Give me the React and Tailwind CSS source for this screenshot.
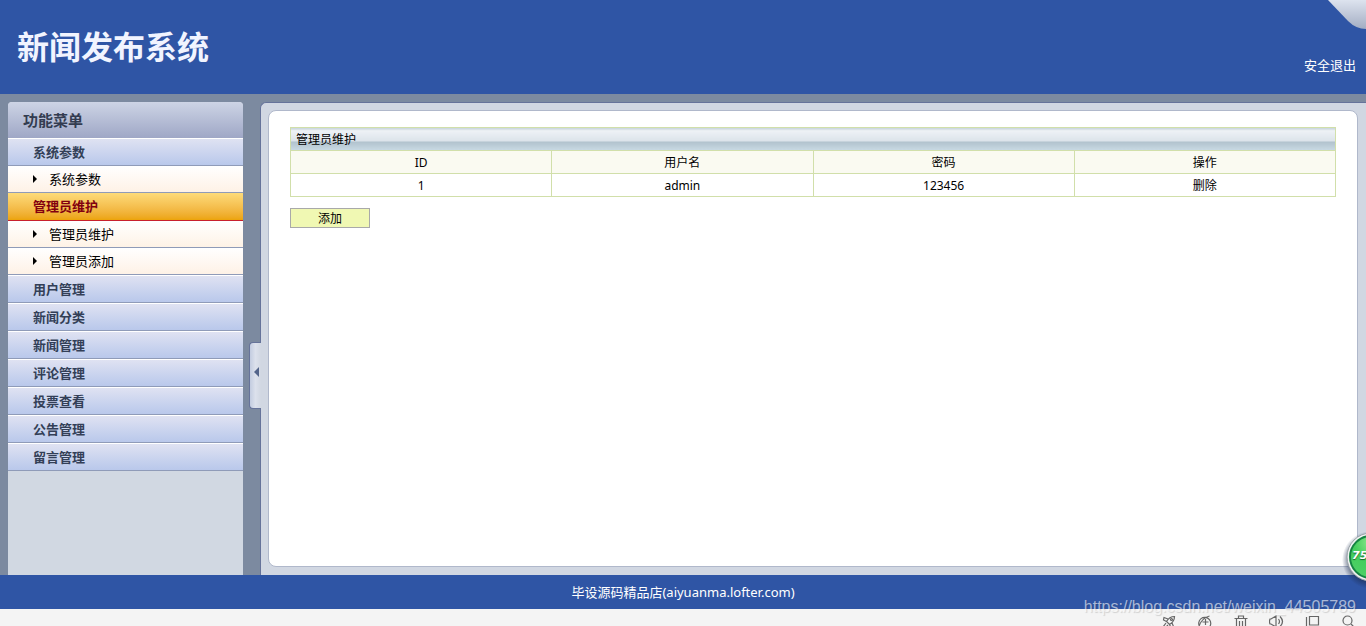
import React, { useState } from 'react';

const menus = [
	{ title: '系统参数', items: ['系统参数'] },
	{ title: '管理员维护', items: ['管理员维护', '管理员添加'] },
	{ title: '用户管理' },
	{ title: '新闻分类' },
	{ title: '新闻管理' },
	{ title: '评论管理' },
	{ title: '投票查看' },
	{ title: '公告管理' },
	{ title: '留言管理' },
];

const admins = [{ id: 1, nome: 'admin', senha: '123456' }];

function Header() {
	return (
		<header className="relative flex h-[94px] shrink-0 items-center justify-between bg-[#2f55a5] pr-[10px] pl-[17px]">
			<h1 className="text-[32px] leading-[36px] font-bold text-[#f1f4ff]">新闻发布系统</h1>
			<a href="#sair" className="mt-[35px] text-[13px] leading-[18px] text-white">
				安全退出
			</a>
			<svg className="absolute top-0 right-0" width="38" height="30" viewBox="0 0 38 30">
				<defs>
					<linearGradient id="canto" x1="0" y1="0" x2="0" y2="1">
						<stop offset="0" stopColor="#dde3ee" />
						<stop offset="1" stopColor="#a3adc3" />
					</linearGradient>
				</defs>
				<path d="M0 0 L20 21 Q28 29 38 29 V0 Z" fill="url(#canto)" />
			</svg>
		</header>
	);
}

function Sidebar({ ativo, setAtivo }) {
	return (
		<nav className="mt-2 w-[235px] shrink-0 overflow-hidden rounded-t-[4px] bg-[#d1d8e2]">
			<h2 className="h-9 bg-linear-to-b from-[#cdd4e5] to-[#9fa7c6] pl-[15px] text-[15px] leading-[36px] font-bold text-[#333c50]">
				功能菜单
			</h2>
			{menus.map((menu) => (
				<div key={menu.title}>
					<button
						type="button"
						onClick={() => setAtivo(menu.title)}
						className={
							menu.title === ativo
								? 'block h-7 w-full border-b border-[#c8202c] bg-linear-to-b from-[#fddb79] to-[#eca406] pl-[25px] text-left text-[13px] leading-[27px] font-bold text-[#82000f]'
								: 'block h-7 w-full border-t border-b border-t-white border-b-[#8f9bb8] bg-linear-to-b from-[#dfe2f2] to-[#b9c8eb] pl-[25px] text-left text-[13px] leading-[25px] font-bold text-[#333f57]'
						}
					>
						{menu.title}
					</button>
					{menu.items?.map((item) => (
						<a
							key={item}
							href="#item"
							className="flex h-[27px] items-center border-b border-[#8f9bb8] bg-linear-to-b from-white to-[#fef2e6] pl-[25px] text-[13px] leading-[18px] text-black"
						>
							<svg className="mr-3 shrink-0" width="4" height="8" viewBox="0 0 4 8">
								<path d="M0 0 L4 4 L0 8 Z" />
							</svg>
							{item}
						</a>
					))}
				</div>
			))}
		</nav>
	);
}

function AdminTable() {
	const celula = 'h-[23px] border border-[#d1dfaa] p-0 pt-[2px] text-center font-normal';

	return (
		<table className="w-full table-fixed border-collapse text-[12px] leading-[18px] text-black">
			<thead>
				<tr>
					<th
						colSpan={4}
						className="h-[23px] border border-[#d1dfaa] bg-[linear-gradient(#c6d0d8_0,#eef2f6_2px,#dbe3ea_13px,#b0c1cc_13px,#c9dae4_100%)] p-0 pt-[2px] pl-[5px] text-left font-normal"
					>
						管理员维护
					</th>
				</tr>
				<tr className="bg-[#fafaf1]">
					<th className={celula}>ID</th>
					<th className={celula}>用户名</th>
					<th className={celula}>密码</th>
					<th className={celula}>操作</th>
				</tr>
			</thead>
			<tbody>
				{admins.map((admin) => (
					<tr key={admin.id}>
						<td className={celula}>{admin.id}</td>
						<td className={celula}>{admin.nome}</td>
						<td className={celula}>{admin.senha}</td>
						<td className={celula}>
							<a href="#excluir">删除</a>
						</td>
					</tr>
				))}
			</tbody>
		</table>
	);
}

function StatusBar() {
	return (
		<div className="flex h-[17px] shrink-0 justify-end gap-5 overflow-hidden bg-[#f4f4f4] pt-[6px] pr-[9px]">
			<svg width="16" height="16" viewBox="0 0 16 16" fill="none" stroke="#666" strokeWidth="1.2">
				<path d="M13.5 1.5 C10 1.5 7.5 3 5.5 6.5 L8.5 9.5 C12 7.5 13.5 5 13.5 1.5 Z M7 4 L3 2.5 L2.5 5 L5.5 6.5 M11 8 L12.5 11.5 L10 12.5 L8.5 9.5 M5 8 L2 12 M7 10 L4 13" />
				<circle cx="10.5" cy="4.5" r="1" />
			</svg>
			<svg width="16" height="16" viewBox="0 0 16 16" fill="none" stroke="#666" strokeWidth="1.2">
				<path d="M11.5 13 A6 6 0 1 0 3 12 M1.5 13 C3 7 7 2.5 12.5 1 M5.5 7 H11.5 M8.5 4 V10" />
			</svg>
			<svg width="16" height="16" viewBox="0 0 16 16" fill="none" stroke="#666" strokeWidth="1.2">
				<path d="M1.5 3.5 H14.5 M5.5 3.5 V1 H10.5 V3.5 M3.5 3.5 V14 H12.5 V3.5 M6.5 6 V12 M9.5 6 V12" />
			</svg>
			<svg width="16" height="16" viewBox="0 0 16 16" fill="none" stroke="#666" strokeWidth="1.2">
				<path d="M1 4 H2 L7 1 V12 L2 9 H1 Q0 6.5 1 4 Z M9.5 4 Q11.5 6.5 9.5 9 M11 1.5 Q16 6.5 11 11.5" />
			</svg>
			<svg width="16" height="16" viewBox="0 0 16 16" fill="none" stroke="#666" strokeWidth="1.2">
				<path d="M1.5 2 V14 M4.5 1.5 H13.5 V10 H4.5 Z" />
			</svg>
			<svg width="16" height="16" viewBox="0 0 16 16" fill="none" stroke="#666" strokeWidth="1.2">
				<circle cx="6.5" cy="5.5" r="4.5" />
				<path d="M10 9 L14 13" />
			</svg>
		</div>
	);
}

export default function App() {
	const [ativo, setAtivo] = useState('管理员维护');
	const [recolhido, setRecolhido] = useState(false);

	return (
		<div
			lang="zh-CN"
			className="relative flex h-screen flex-col overflow-hidden bg-[#7c8aa0] font-['Noto_Sans','Noto_Sans_CJK_SC',sans-serif]"
		>
			<Header />

			<div className="flex min-h-0 flex-1 pl-2">
				{!recolhido && <Sidebar ativo={ativo} setAtivo={setAtivo} />}

				<div className="relative mt-2 ml-[17px] flex min-w-0 flex-1 rounded-tl-[6px] border-t border-l border-[#66739a] bg-[#d1d7e2] pt-[7px] pr-2 pb-2 pl-[7px]">
					<button
						type="button"
						aria-label="收起菜单"
						onClick={() => setRecolhido(!recolhido)}
						className="absolute top-[239px] -left-3 flex h-[67px] w-3 items-center justify-end rounded-l-[4px] border border-r-0 border-[#66739a] bg-linear-to-r from-[#c3cce0] via-[#dce1ec] to-[#d1d7e2] pr-[2px]"
					>
						<svg className="-mt-2" width="5" height="10" viewBox="0 0 5 10">
							<path d="M5 0 V10 L0 5 Z" fill="#53648a" />
						</svg>
					</button>

					<main className="min-w-0 flex-1 rounded-[8px] border border-[#b0b8cb] bg-white px-[21px] pt-4">
						<AdminTable />
						<button
							type="button"
							className="mt-[11px] block h-5 w-20 border border-[#a9a9a9] bg-[#f0f8b3] pt-px text-[12px] leading-[18px] text-black"
						>
							添加
						</button>
					</main>
				</div>
			</div>

			<footer className="h-[34px] shrink-0 bg-[#2f55a5] text-center text-[13px] leading-[34px] text-white">
				毕设源码精品店(aiyuanma.lofter.com)
			</footer>
			<StatusBar />

			{/* bolinha do acelerador */}
			<svg className="absolute right-0 bottom-[37px]" width="24" height="60" viewBox="0 0 24 60">
				<defs>
					<radialGradient id="verde" cx="0.5" cy="0.15" r="0.9">
						<stop offset="0" stopColor="#8fe88f" />
						<stop offset="0.45" stopColor="#43cd5c" />
						<stop offset="1" stopColor="#4fd067" />
					</radialGradient>
					<radialGradient id="sombra">
						<stop offset="0.75" stopColor="#1c2c50" stopOpacity="0.6" />
						<stop offset="1" stopColor="#1c2c50" stopOpacity="0" />
					</radialGradient>
				</defs>
				<circle cx="29" cy="31" r="29" fill="url(#sombra)" />
				<circle cx="29" cy="28" r="24" fill="#f1f3f3" stroke="#9ba5a8" />
				<circle cx="29" cy="28" r="21" fill="url(#verde)" stroke="#168443" strokeWidth="2" />
			</svg>
			<span className="absolute right-0 bottom-[62px] w-[14px] overflow-hidden font-['DejaVu_Sans'] text-[11px] leading-4 font-bold text-white italic [text-shadow:0_1px_1px_#14602c]">
				75
			</span>

			<span className="pointer-events-none absolute right-[10px] bottom-[9px] font-['Liberation_Sans',sans-serif] text-[16px] leading-5 text-white/60 [text-shadow:1px_1px_1px_rgba(0,0,0,0.15)]">
				https://blog.csdn.net/weixin_44505789
			</span>
		</div>
	);
}
